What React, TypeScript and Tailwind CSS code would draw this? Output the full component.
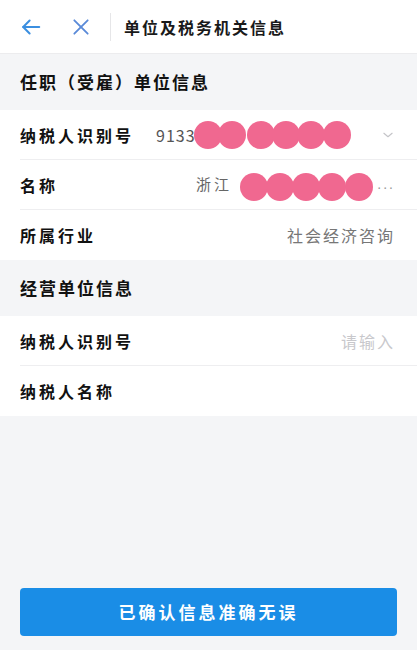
import React from 'react';

const font = { fontFamily: '"Noto Sans CJK SC", "Noto Sans", sans-serif' };

function Blob({ left, top }: { left: number; top: number }) {
  return (
    <span
      className="absolute h-[28px] w-[28px] rounded-full bg-[#f06890]"
      style={{ left, top }}
    />
  );
}

function SectionTitle({ children }: { children: React.ReactNode }) {
  return (
    <div className="flex h-[56px] items-center bg-[#f4f5f7] px-5">
      <span className="text-[17px] font-bold tracking-[2px] text-[#111]">{children}</span>
    </div>
  );
}

function Row({
  label,
  children,
  last,
}: {
  label: string;
  children?: React.ReactNode;
  last?: boolean;
}) {
  return (
    <div className="bg-white pl-5">
      <div
        className={
          'flex h-[50px] items-center justify-between pr-[22px] ' +
          (last ? '' : 'border-b border-[#eeeef0]')
        }
      >
        <span className="shrink-0 text-[16px] font-bold tracking-[3px] text-[#111]">{label}</span>
        {children}
      </div>
    </div>
  );
}

export default function App() {
  const idBlobs = [194, 218, 247, 272, 297, 323];
  const nameBlobs = [240, 266, 292, 318, 345];

  return (
    <div className="relative flex h-[650px] w-[417px] flex-col bg-[#f4f5f7]" style={font}>
      <header className="flex h-[54px] items-center border-b border-[#ececee] bg-white">
        <button className="ml-[19px] flex h-6 w-6 items-center justify-center text-[#3b8fe0]">
          <svg width="22" height="22" viewBox="0 0 24 24" fill="none" stroke="currentColor" strokeWidth="2.2" strokeLinecap="round" strokeLinejoin="round">
            <path d="M21 12H3.5" />
            <path d="M10.5 5l-7 7 7 7" />
          </svg>
        </button>
        <button className="ml-[26px] flex h-6 w-6 items-center justify-center text-[#5a8ad8]">
          <svg width="20" height="20" viewBox="0 0 24 24" fill="none" stroke="currentColor" strokeWidth="2.2" strokeLinecap="round">
            <path d="M4 4l16 16" />
            <path d="M20 4L4 20" />
          </svg>
        </button>
        <div className="ml-[17px] h-[28px] w-px bg-[#e6e6e8]" />
        <h1 className="ml-[13px] text-[16px] font-bold tracking-[2px] text-[#1a1a1a]">单位及税务机关信息</h1>
      </header>

      <SectionTitle>任职（受雇）单位信息</SectionTitle>

      <div className="relative">
        <Row label="纳税人识别号">
          <span className="ml-[22px] flex-1 text-[16px] tracking-[1px] text-[#555]">9133</span>
          <svg width="14" height="14" viewBox="0 0 24 24" fill="none" stroke="#c4c4c8" strokeWidth="2" strokeLinecap="round" strokeLinejoin="round">
            <path d="M5 9l7 6 7-6" />
          </svg>
        </Row>
        <Row label="名称">
          <span className="min-w-0 flex-1 whitespace-nowrap pl-[138px] text-[15px] tracking-[3px] text-[#666]">浙江</span>
          <span className="shrink-0 whitespace-nowrap font-['Liberation_Sans',sans-serif] text-[14px] tracking-[2px] text-[#999]">...</span>
        </Row>
        <Row label="所属行业" last>
          <span className="text-[16px] tracking-[2px] text-[#777]">社会经济咨询</span>
        </Row>
        {idBlobs.map((l) => (
          <Blob key={'a' + l} left={l} top={11} />
        ))}
        {nameBlobs.map((l) => (
          <Blob key={'b' + l} left={l} top={63} />
        ))}
      </div>

      <SectionTitle>经营单位信息</SectionTitle>

      <Row label="纳税人识别号">
        <span className="text-[16px] tracking-[2px] text-[#c8c8cc]">请输入</span>
      </Row>
      <Row label="纳税人名称" last />

      <div className="flex-1" />

      <div className="px-5 pb-[14px]">
        <button className="flex h-[48px] w-full items-center justify-center rounded-[4px] bg-[#1a8de6] text-[17px] font-bold tracking-[3px] text-white">
          已确认信息准确无误
        </button>
      </div>
    </div>
  );
}
